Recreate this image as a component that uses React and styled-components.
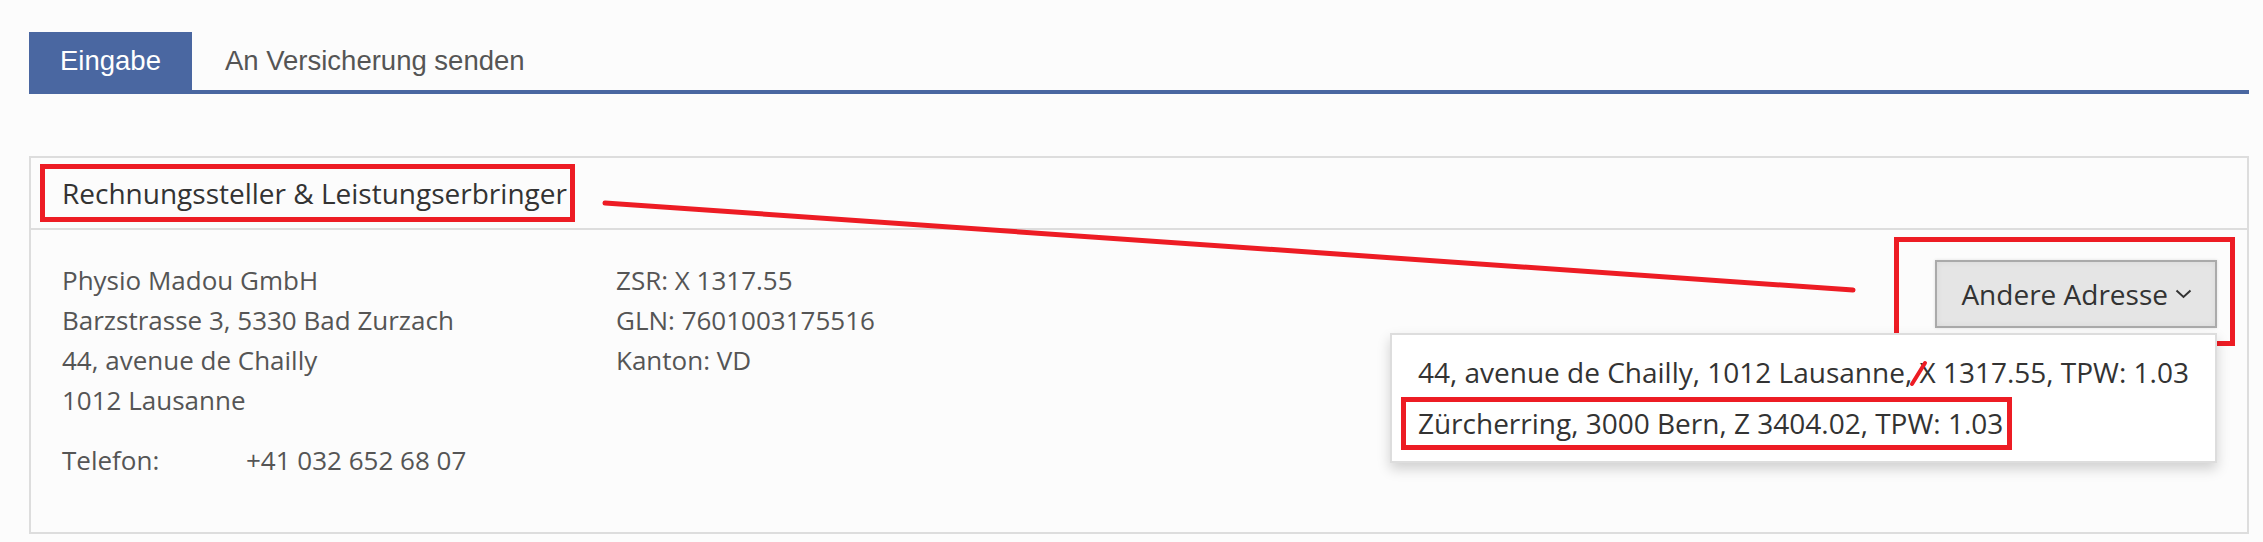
import React from "react";
import styled, { createGlobalStyle } from "styled-components";

const GlobalStyle = createGlobalStyle`
  html, body {
    margin: 0;
    background: #fcfcfc;
  }
  body {
    font-family: "Open Sans", "Liberation Sans", sans-serif;
  }
`;

const Page = styled.div`
  padding: 32px 14px 0 29px;
`;

const Tabs = styled.div`
  display: flex;
  border-bottom: 4px solid #4a67a1;
`;

const Tab = styled.div`
  height: 58px;
  line-height: 58px;
  padding: 0 ${(p) => (p.$active ? "31px" : "33px")};
  font-family: "Liberation Sans", Arial, sans-serif;
  font-size: 27.5px;
  color: ${(p) => (p.$active ? "#fff" : "#555")};
  background: ${(p) => (p.$active ? "#4a67a1" : "transparent")};
`;

const Panel = styled.section`
  position: relative;
  margin-top: 62px;
  border: 2px solid #ddd;
  background: #fcfcfc;
`;

const PanelHeader = styled.div`
  height: 70px;
  line-height: 70px;
  padding: 0 31px;
  border-bottom: 2px solid #ddd;
  font-size: 28px;
  color: #333;
`;

const Marked = styled.span`
  position: relative;
  display: inline-block;
`;

const Annotation = styled.span`
  position: absolute;
  top: ${(p) => p.$t}px;
  right: ${(p) => p.$r}px;
  bottom: ${(p) => p.$b}px;
  left: ${(p) => p.$l}px;
  border: 5px solid #ed1c24;
  pointer-events: none;
`;

const PanelBody = styled.div`
  display: flex;
  align-items: flex-start;
  padding: 30px 30px 52px 31px;
  font-size: 26px;
  line-height: 40px;
  color: #555;
`;

const AddressCol = styled.div`
  flex: 0 0 554px;
`;

const InfoCol = styled.div`
  flex: 1;
`;

const Line = styled.div``;

const PhoneRow = styled.div`
  display: flex;
  margin-top: 20px;
`;

const PhoneLabel = styled.span`
  width: 184px;
`;

const Actions = styled.div`
  position: relative;
`;

const DropButton = styled.button`
  display: flex;
  align-items: center;
  gap: 7px;
  height: 68px;
  padding: 0 23px 0 24px;
  border: 2px solid #aaa;
  background: #e5e5e5;
  box-shadow: inset 0 0 6px rgba(0, 0, 0, 0.06), 0 0 3px rgba(0, 0, 0, 0.12);
  font-family: "Open Sans", sans-serif;
  font-size: 28px;
  color: #333;
  cursor: pointer;
`;

const Menu = styled.ul`
  position: absolute;
  top: calc(100% + 5px);
  right: 0;
  margin: 0;
  padding: 12px 0 12px;
  list-style: none;
  background: #fff;
  border: 2px solid #ddd;
  box-shadow: 0 6px 12px rgba(0, 0, 0, 0.175);
  white-space: nowrap;
`;

const MenuItem = styled.li`
  padding: 0 26px;
  line-height: 51px;
  font-size: 28px;
  color: #333;
`;

const Struck = styled.span`
  position: relative;
  display: inline-block;
`;

const Slash = styled.svg`
  position: absolute;
  left: -8px;
  top: 14px;
  overflow: visible;
`;

const Overlay = styled.svg`
  position: absolute;
  top: 0;
  left: 0;
  width: 100%;
  height: 100%;
  overflow: visible;
  pointer-events: none;
`;

const Chevron = () => (
  <svg width="17" height="10" viewBox="0 0 17 10">
    <polyline points="1.5,1.5 8.5,8 15.5,1.5" fill="none" stroke="#333" strokeWidth="2" />
  </svg>
);

export default function App() {
  return (
    <Page>
      <GlobalStyle />
      <Tabs>
        <Tab $active>Eingabe</Tab>
        <Tab>An Versicherung senden</Tab>
      </Tabs>

      <Panel>
        <PanelHeader>
          <Marked>
            Rechnungssteller &amp; Leistungserbringer
            <Annotation $t={6} $r={-8} $b={6} $l={-22} />
          </Marked>
        </PanelHeader>

        <PanelBody>
          <AddressCol>
            <Line>Physio Madou GmbH</Line>
            <Line>Barzstrasse 3, 5330 Bad Zurzach</Line>
            <Line>44, avenue de Chailly</Line>
            <Line>1012 Lausanne</Line>
            <PhoneRow>
              <PhoneLabel>Telefon:</PhoneLabel>
              <span>+41 032 652 68 07</span>
            </PhoneRow>
          </AddressCol>

          <InfoCol>
            <Line>ZSR: X 1317.55</Line>
            <Line>GLN: 7601003175516</Line>
            <Line>Kanton: VD</Line>
          </InfoCol>

          <Actions>
            <DropButton>
              Andere Adresse
              <Chevron />
            </DropButton>
            <Annotation $t={-23} $r={-18} $b={-18} $l={-41} />
            <Menu>
              <MenuItem>
                44, avenue de Chailly, 1012 Lausanne,{" "}
                <Struck>
                  X
                  <Slash width="16" height="25">
                    <line x1="1" y1="23" x2="14" y2="2" stroke="#ed1c24" strokeWidth="4" strokeLinecap="round" />
                  </Slash>
                </Struck>{" "}
                1317.55, TPW: 1.03
              </MenuItem>
              <MenuItem>
                <Marked>
                  Zürcherring, 3000 Bern, Z 3404.02, TPW: 1.03
                  <Annotation $t={-1} $r={-9} $b={-1} $l={-17} />
                </Marked>
              </MenuItem>
            </Menu>
          </Actions>
        </PanelBody>

        <Overlay>
          <line x1="574" y1="45" x2="1822" y2="132" stroke="#ed1c24" strokeWidth="5" strokeLinecap="round" />
        </Overlay>
      </Panel>
    </Page>
  );
}
